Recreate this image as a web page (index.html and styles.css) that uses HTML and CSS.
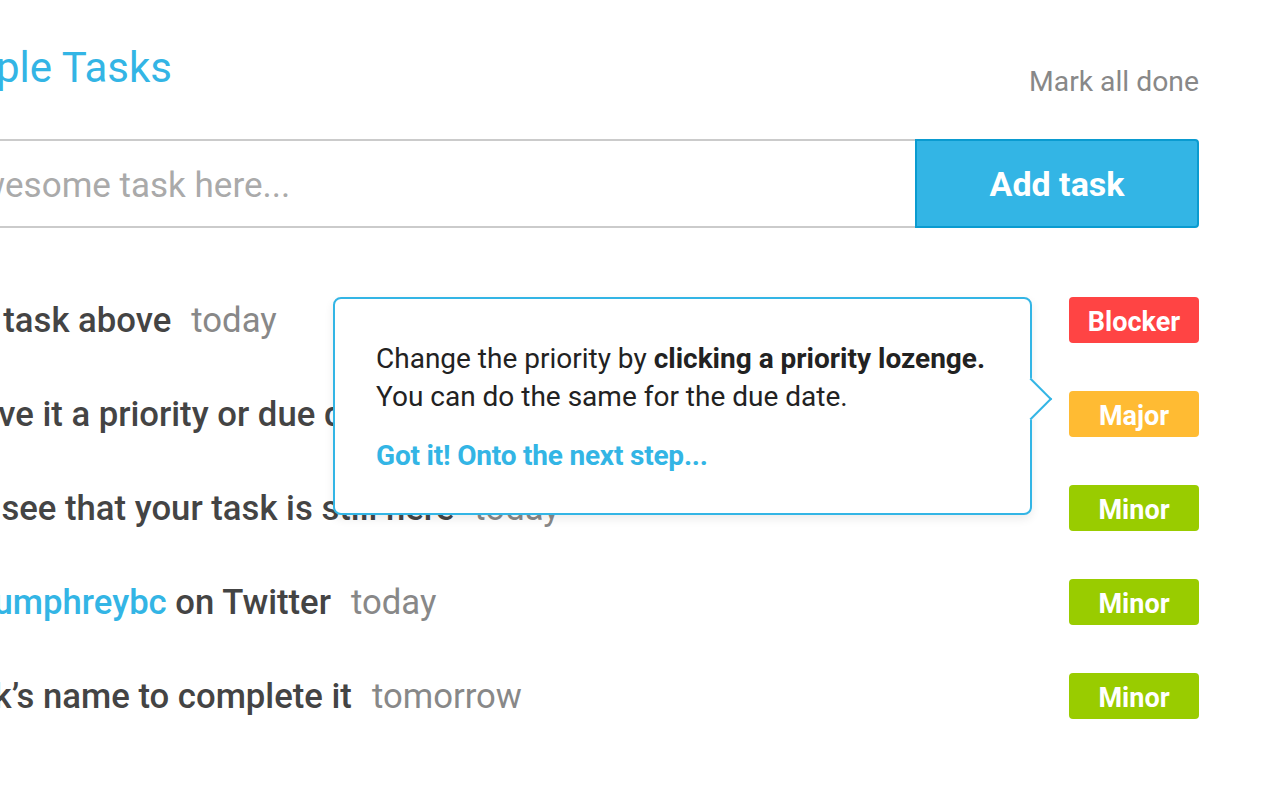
FILE: index.html
```html
<!DOCTYPE html>
<html lang="en">
<head>
<meta charset="utf-8">
<title>Simple Tasks</title>
<link rel="stylesheet" href="styles.css">
</head>
<body>
<div class="app">
  <header class="header">
    <div class="brand">
      <svg class="logo" width="64" height="48" viewBox="0 0 64 48" aria-hidden="true">
        <rect x="2" y="2" width="44" height="44" rx="6" fill="none" stroke="#33b5e5" stroke-width="4"/>
        <path d="M12 24 L22 34 L40 12" fill="none" stroke="#33b5e5" stroke-width="5"/>
      </svg>
      <h1 class="title">Simple Tasks</h1>
    </div>
    <a class="mark-all" href="#">Mark all done</a>
  </header>
  <form class="new-task">
    <input class="task-input" type="text" placeholder="Your awesome task here...">
    <button class="add-btn" type="button">Add task</button>
  </form>
  <ul class="tasks">
    <li class="task">
      <span class="task-text"><span class="name">Add a new task above</span><span class="due">today</span></span>
      <span class="lozenge blocker">Blocker</span>
    </li>
    <li class="task">
      <span class="task-text"><span class="name">Perhaps give it a priority or due date</span><span class="due">today</span></span>
      <span class="lozenge major">Major</span>
    </li>
    <li class="task">
      <span class="task-text"><span class="name">Refresh to see that your task is still here</span><span class="due">today</span></span>
      <span class="lozenge minor">Minor</span>
    </li>
    <li class="task">
      <span class="task-text"><span class="name">Follow <a class="mention" href="#">@humphreybc</a> on Twitter</span><span class="due">today</span></span>
      <span class="lozenge minor">Minor</span>
    </li>
    <li class="task">
      <span class="task-text"><span class="name">Click a task’s name to complete it</span><span class="due">tomorrow</span></span>
      <span class="lozenge minor">Minor</span>
    </li>
  </ul>
</div>
<div class="tip">
  <p class="tip-text">Change the priority by <strong>clicking a priority lozenge.</strong><br>You can do the same for the due date.</p>
  <a class="tip-next" href="#">Got it! Onto the next step...</a>
  <span class="tip-arrow"></span>
</div>
</body>
</html>
```

FILE: styles.css
```css
* { box-sizing: border-box; }
html, body { margin: 0; padding: 0; }
body {
  background: #fff;
  font-family: Roboto, "Noto Sans", sans-serif;
  overflow: hidden;
  width: 1280px;
  height: 800px;
  position: relative;
}
.app {
  width: 1366px;
  margin-left: -167px;
}
.header {
  display: flex;
  justify-content: space-between;
  align-items: flex-end;
  height: 108px;
  padding-bottom: 10px;
}
.brand {
  display: flex;
  align-items: center;
  gap: 27px;
}
.logo { display: block; }
.title {
  margin: 0;
  font-size: 42px;
  font-weight: 400;
  color: #33b5e5;
  line-height: 48px;
  padding-bottom: 6px;
}
.mark-all {
  font-size: 28.3px;
  color: #888;
  text-decoration: none;
  line-height: 32px;
}
.new-task {
  display: flex;
  margin: 31px 0 0;
  height: 89px;
}
.task-input {
  flex: 1;
  border: none;
  border-top: 2px solid #cbcbcb;
  border-bottom: 2px solid #cbcbcb;
  font-family: Roboto, sans-serif;
  font-size: 35px;
  color: #444;
  padding: 4px 0 0 47px;
  outline: none;
}
.task-input::placeholder { color: #aaa; }
.add-btn {
  width: 284px;
  background: #33b5e5;
  border: 2px solid #0a9bd0;
  border-radius: 0 4px 4px 0;
  color: #fff;
  font-family: Roboto, sans-serif;
  font-weight: 700;
  font-size: 34px;
  padding-top: 2px;
}
.tasks {
  list-style: none;
  margin: 69px 0 0;
  padding: 0;
  display: flex;
  flex-direction: column;
  gap: 48px;
}
.task {
  display: flex;
  justify-content: space-between;
  align-items: center;
  height: 46px;
}
.task-text {
  font-size: 34.7px;
  white-space: nowrap;
}
.name {
  font-weight: 500;
  color: #444;
}
.mention { color: #33b5e5; text-decoration: none; }
.due {
  color: #888;
  margin-left: 20px;
}
.lozenge {
  width: 130px;
  height: 46px;
  border-radius: 4px;
  color: #fff;
  font-weight: 700;
  font-size: 27px;
  display: flex;
  align-items: center;
  justify-content: center;
  padding-top: 3px;
}
.blocker { background: #ff4444; }
.major { background: #ffbb33; }
.minor { background: #99cc00; }
.tip {
  position: absolute;
  left: 333px;
  top: 297px;
  width: 699px;
  height: 218px;
  background: #fff;
  border: 2px solid #33b5e5;
  border-radius: 8px;
  padding: 41px 30px 0 41px;
  box-shadow: 0 4px 10px rgba(0, 0, 0, 0.08);
}
.tip-text {
  margin: 0;
  font-size: 28px;
  line-height: 38px;
  color: #222;
}
.tip-text strong { font-weight: 700; }
.tip-next {
  display: block;
  margin-top: 21px;
  font-size: 28px;
  line-height: 38px;
  font-weight: 700;
  color: #33b5e5;
  text-decoration: none;
  letter-spacing: -0.2px;
}
.tip-arrow {
  position: absolute;
  right: -16px;
  top: 85px;
  width: 30px;
  height: 30px;
  background: #fff;
  border-top: 2px solid #33b5e5;
  border-right: 2px solid #33b5e5;
  transform: rotate(45deg);
}
```
